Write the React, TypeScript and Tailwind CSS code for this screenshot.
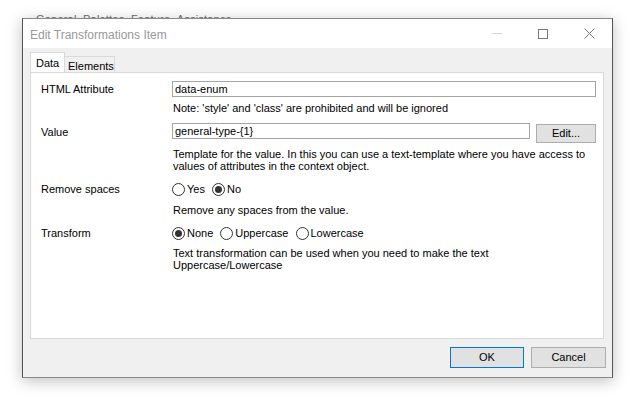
import React from "react";

function Radio({ label, checked }: { label: string; checked?: boolean }) {
  return (
    <div className="flex items-center gap-[2px]">
      <span className="w-[13px] h-[13px] rounded-full border border-[#333] bg-white flex items-center justify-center">
        {checked && <span className="w-[7px] h-[7px] rounded-full bg-[#333]" />}
      </span>
      <span>{label}</span>
    </div>
  );
}

export default function App() {
  return (
    <div
      className="w-[635px] h-[404px] bg-white overflow-hidden text-[11px] text-black"
      style={{ fontFamily: '"Liberation Sans", Arial, sans-serif' }}
    >
      {/* window behind, only its top line peeks out */}
      <div className="h-[18px] overflow-hidden pl-[36px] pt-[11px] text-[#666] tracking-[0.2px]">
        General&nbsp;&nbsp;Palettes&nbsp;&nbsp;Feature&nbsp;&nbsp;Assistance
      </div>

      <div className="ml-[22px] w-[591px] h-[360px] flex flex-col border border-[#555] border-t-[#888] border-b-[#888] shadow-[0_3px_14px_rgba(0,0,0,0.25)] bg-[#f0f0f0]">
        {/* title bar */}
        <div className="h-[29px] bg-white flex items-center pl-[7px] shrink-0">
          <span className="text-[12px] text-[#999] flex-1 pt-[3px]">Edit Transformations Item</span>
          <div className="flex items-center h-full">
            <div className="w-[46px] flex justify-center">
              <span className="w-[10px] h-[1px] bg-[#d4d4d4]" />
            </div>
            <div className="w-[46px] flex justify-center">
              <span className="w-[10px] h-[10px] border border-[#777]" />
            </div>
            <div className="w-[46px] flex justify-center">
              <svg width="11" height="11" viewBox="0 0 11 11">
                <path d="M0.5 0.5 L10.5 10.5 M10.5 0.5 L0.5 10.5" stroke="#777" strokeWidth="1" />
              </svg>
            </div>
          </div>
        </div>

        {/* body */}
        <div className="flex-1 flex flex-col pl-[7px] pr-[8px] pt-[5px]">
          <div className="flex items-end h-[19px]">
            <div className="h-[20px] w-[35px] bg-white border border-b-0 border-[#d9d9d9] pl-[5px] pt-[2px] relative z-10">
              Data
            </div>
            <div className="h-[16px] w-[50px] border border-l-0 border-b-0 border-[#d9d9d9] pl-[3px] pt-[1px]">
              Elements
            </div>
          </div>
          <div className="h-[267px] bg-white border border-[#d9d9d9] pl-[10px] pr-[7px] flex flex-col">
            <div className="flex items-center mt-[8px]">
              <div className="w-[131px]">HTML Attribute</div>
              <div className="flex-1 h-[16px] border border-[#a5a5a5] pl-[2px] leading-[14px]">data-enum</div>
            </div>
            <div className="ml-[131px] mt-[4px] leading-[13px] pl-[1px]">
              Note: 'style' and 'class' are prohibited and will be ignored
            </div>

            <div className="flex items-start mt-[8px]">
              <div className="w-[131px] pt-[3px] leading-[13px]">Value</div>
              <div className="flex-1 h-[16px] border border-[#a5a5a5] pl-[2px] leading-[14px]">general-type-{"{1}"}</div>
              <div className="ml-[6px] mt-[1px] w-[60px] h-[19px] bg-[#e1e1e1] border border-[#adadad] flex items-center justify-center">
                Edit...
              </div>
            </div>
            <div className="ml-[131px] mt-[5px] leading-[12px] pl-[1px]">
              Template for the value. In this you can use a text-template where you have access to
              <br />
              values of attributes in the context object.
            </div>

            <div className="flex items-center mt-[11px] h-[13px]">
              <div className="w-[131px]">Remove spaces</div>
              <div className="flex items-center gap-[7px]">
                <Radio label="Yes" />
                <Radio label="No" checked />
              </div>
            </div>
            <div className="ml-[131px] mt-[8px] leading-[13px] pl-[1px]">Remove any spaces from the value.</div>

            <div className="flex items-center mt-[10px] h-[13px]">
              <div className="w-[131px]">Transform</div>
              <div className="flex items-center gap-[7px]">
                <Radio label="None" checked />
                <Radio label="Uppercase" />
                <Radio label="Lowercase" />
              </div>
            </div>
            <div className="ml-[131px] mt-[7px] leading-[12px] pl-[1px]">
              Text transformation can be used when you need to make the text
              <br />
              Uppercase/Lowercase
            </div>
          </div>

          <div className="flex justify-end gap-[7px] mt-[8px] mr-[-2px]">
            <div className="w-[74px] h-[21px] bg-[#e1e1e1] border border-[#0078d7] flex items-center justify-center">
              OK
            </div>
            <div className="w-[75px] h-[21px] bg-[#e1e1e1] border border-[#adadad] flex items-center justify-center">
              Cancel
            </div>
          </div>
        </div>
      </div>
    </div>
  );
}
